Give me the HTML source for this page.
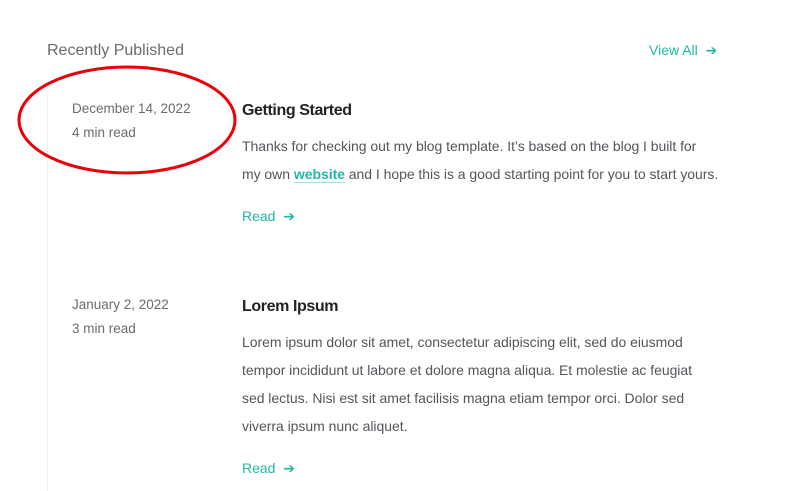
<!DOCTYPE html>
<html><head><meta charset="utf-8"><style>
body{margin:0;background:#fff;width:795px;height:491px;overflow:hidden;position:relative;font-family:"Liberation Sans","DejaVu Sans",sans-serif;}
.a{position:absolute;white-space:nowrap}
.h{font-size:16px;color:#6b6b70;left:47px;top:42px}
.va{font-size:14px;color:#1fb8a6;left:649px;top:42px}
.line{position:absolute;left:47px;top:96px;width:1px;height:395px;background:#ececec}
.d{font-size:13.5px;color:#6b6b70;left:72px}
.t{font-size:16px;font-weight:bold;color:#222;left:242px;letter-spacing:-0.4px}
.p{font-size:14px;color:#55555c;left:242px;line-height:28px;letter-spacing:-0.04px}
.p b{color:#1fb8a6;border-bottom:1px solid #9fe0d8}
.r{font-size:14px;color:#1fb8a6;left:242px}
</style></head><body>
<div class="a h">Recently Published</div>
<div class="a va">View All &nbsp;➔</div>
<div class="line"></div>
<div class="a d" style="top:101px">December 14, 2022</div>
<div class="a d" style="top:125px">4 min read</div>
<div class="a t" style="top:102px">Getting Started</div>
<div class="a p" style="top:132px">Thanks for checking out my blog template. It’s based on the blog I built for<br>my own <b>website</b> and I hope this is a good starting point for you to start yours.</div>
<div class="a r" style="top:208px">Read &nbsp;➔</div>
<div class="a d" style="top:297px">January 2, 2022</div>
<div class="a d" style="top:321px">3 min read</div>
<div class="a t" style="top:298px">Lorem Ipsum</div>
<div class="a p" style="top:328px">Lorem ipsum dolor sit amet, consectetur adipiscing elit, sed do eiusmod<br>tempor incididunt ut labore et dolore magna aliqua. Et molestie ac feugiat<br>sed lectus. Nisi est sit amet facilisis magna etiam tempor orci. Dolor sed<br>viverra ipsum nunc aliquet.</div>
<div class="a r" style="top:460px">Read &nbsp;➔</div>
<svg class="a" style="left:0;top:0" width="795" height="491"><ellipse cx="127" cy="120" rx="108" ry="53" fill="none" stroke="#e8000b" stroke-width="3"/></svg>
</body></html>
